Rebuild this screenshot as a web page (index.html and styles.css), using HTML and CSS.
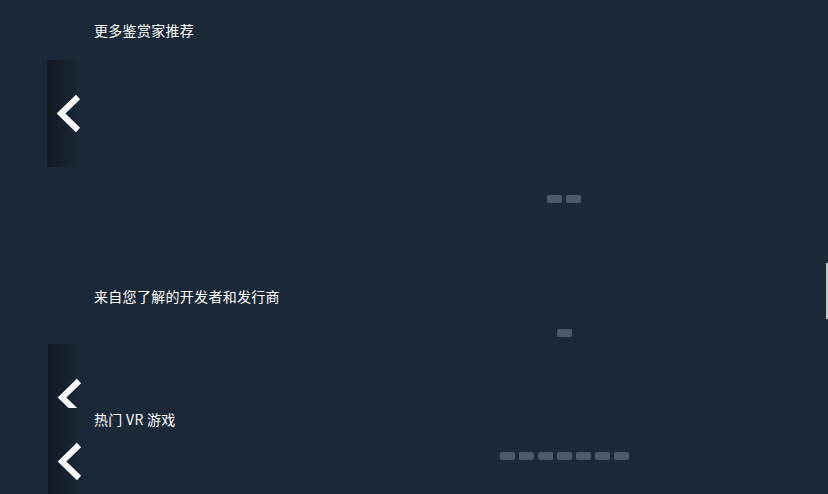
FILE: index.html
```
<!doctype html>
<html lang="zh-CN">
<head>
  <meta charset="UTF-8">
  <meta name="viewport" content="width=device-width, initial-scale=1.0">
  <title>商店推荐</title>
  <link rel="stylesheet" href="styles.css">
</head>
<body>
  <section class="shelf shelf-curators">
    <h2 class="shelf-title">更多鉴赏家推荐</h2>
    <div class="carousel">
      <a class="arrow" href="javascript:void(0)">
        <svg viewBox="0 0 36 107" width="36" height="107"><polyline points="31,37 14,53.5 31,70"/></svg>
      </a>
    </div>
    <div class="pager">
      <span></span><span></span>
    </div>
  </section>

  <section class="shelf shelf-devs">
    <h2 class="shelf-title">来自您了解的开发者和发行商</h2>
    <div class="pager">
      <span></span>
    </div>
    <div class="carousel carousel-cut">
      <a class="arrow" href="javascript:void(0)">
        <svg viewBox="0 0 36 107" width="36" height="107"><polyline points="31,37 14,53.5 31,70"/></svg>
      </a>
    </div>
  </section>

  <section class="shelf shelf-vr">
    <div class="carousel">
      <a class="arrow" href="javascript:void(0)">
        <svg viewBox="0 0 36 107" width="36" height="107"><polyline points="31,37 14,53.5 31,70"/></svg>
      </a>
    </div>
    <div class="shelf-body">
      <h2 class="shelf-title">热门 VR 游戏</h2>
      <div class="pager">
        <span></span><span></span><span></span><span></span><span></span><span></span><span></span>
      </div>
    </div>
  </section>

  <div class="edge-bar"></div>
</body>
</html>
```

FILE: styles.css
```
html {
  overflow: hidden;
}
body {
  margin: 0;
  background: #1b2838;
  color: #fff;
  font-family: "Noto Sans CJK SC", "Noto Sans", sans-serif;
}
.shelf-title {
  margin: 0;
  padding: 0 0 1px 94px;
  font-size: 14px;
  font-weight: normal;
  line-height: 20px;
  letter-spacing: .3px;
}
.carousel {
  height: 107px;
}
.carousel .arrow {
  display: block;
  width: 36px;
  height: 107px;
  margin-left: 47px;
  background: linear-gradient(to right, rgba(0, 0, 0, .35) 5%, rgba(0, 0, 0, 0) 95%);
}
.carousel .arrow svg {
  display: block;
}
.carousel .arrow polyline {
  fill: none;
  stroke: #fff;
  stroke-width: 6;
  stroke-linejoin: miter;
}
.carousel-cut {
  height: 64px;
  overflow: hidden;
}
.pager {
  display: flex;
  justify-content: center;
  gap: 4px;
  padding-left: 300px;
}
.pager span {
  width: 15px;
  height: 8px;
  border-radius: 2px;
  background: #4d5a6a;
}

/* curators */
.shelf-curators {
  padding-top: 20px;
}
.shelf-curators .carousel {
  margin-top: 19px;
}
.shelf-curators .pager {
  margin-top: 28px;
}

/* developers */
.shelf-devs {
  padding-top: 83px;
}
.shelf-devs .pager {
  margin-top: 22px;
}
.shelf-devs .carousel {
  margin-top: 7px;
}
.shelf-devs .carousel .arrow {
  margin-left: 48px;
}

/* vr */
.shelf-vr {
  display: grid;
}
.shelf-vr > * {
  grid-area: 1 / 1;
}
.shelf-vr .carousel .arrow {
  margin-left: 48px;
}
.shelf-vr .shelf-body {
  padding-top: 1px;
}
.shelf-vr .pager {
  margin-top: 22px;
}

.edge-bar {
  position: fixed;
  top: 263px;
  right: 0;
  width: 2px;
  height: 56px;
  background: #c3c9cf;
}
```
